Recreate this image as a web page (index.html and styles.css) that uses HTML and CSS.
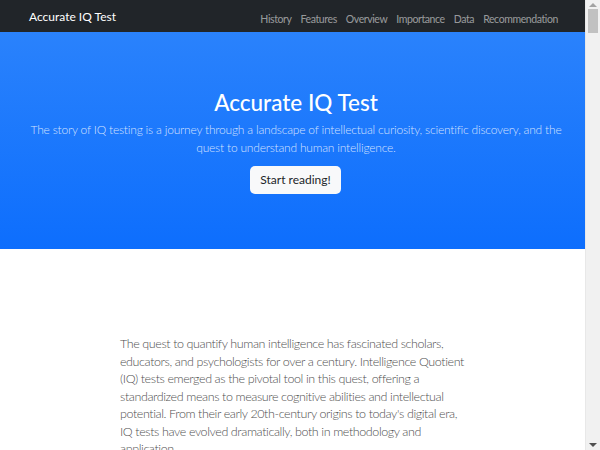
FILE: index.html
```html
<!DOCTYPE html>
<html lang="en">
<head>
<meta charset="utf-8">
<title>Accurate IQ Test</title>
<link rel="stylesheet" href="styles.css">
</head>
<body>
<div class="page">
  <nav class="navbar">
    <a class="brand" href="#">Accurate IQ Test</a>
    <ul class="nav-links">
      <li><a href="#">History</a></li>
      <li><a href="#">Features</a></li>
      <li><a href="#">Overview</a></li>
      <li><a href="#">Importance</a></li>
      <li><a href="#">Data</a></li>
      <li><a href="#">Recommendation</a></li>
    </ul>
  </nav>
  <header class="hero">
    <h1 class="hero-title">Accurate IQ Test</h1>
    <p class="hero-lead">The story of IQ testing is a journey through a landscape of intellectual curiosity, scientific discovery, and the quest to understand human intelligence.</p>
    <a class="btn-light" href="#">Start reading!</a>
  </header>
  <main class="content">
    <p class="intro">The quest to quantify human intelligence has fascinated scholars, educators, and psychologists for over a century. Intelligence Quotient (IQ) tests emerged as the pivotal tool in this quest, offering a standardized means to measure cognitive abilities and intellectual potential. From their early 20th-century origins to today's digital era, IQ tests have evolved dramatically, both in methodology and application.</p>
  </main>
</div>
<div class="scrollbar" aria-hidden="true">
  <span class="arrow arrow-up"></span>
  <span class="thumb"></span>
  <span class="arrow arrow-down"></span>
</div>
</body>
</html>
```
FILE: styles.css
```css
* { box-sizing: border-box; }
html, body { margin: 0; padding: 0; }
body {
  font-family: "Lato", "Liberation Sans", sans-serif;
  color: #212529;
  background: #fff;
}
a { text-decoration: none; }
.page {
  margin-right: 15px;
}
.navbar {
  height: 32px;
  background: #212529;
  display: flex;
  align-items: center;
  justify-content: space-between;
  padding: 0 27px 0 29px;
}
.brand {
  color: #fff;
  font-size: 12px;
  font-weight: 400;
}
.nav-links {
  list-style: none;
  margin: 0;
  padding: 0;
  display: flex;
  gap: 9px;
}
.nav-links a {
  color: rgba(255,255,255,0.55);
  font-size: 10.5px;
  letter-spacing: -0.4px;
}
.hero {
  height: 217px;
  background: linear-gradient(180deg, #2a82fc 0%, #0d6efd 100%);
  display: flex;
  flex-direction: column;
  align-items: center;
  padding-top: 57px;
  text-align: center;
  color: #fff;
}
.hero-title {
  margin: 0 0 5px;
  font-size: 22.5px;
  font-weight: 500;
  line-height: 27px;
  padding-left: 7px;
}
.hero-lead {
  margin: 0 0 9px;
  font-size: 12px;
  font-weight: 300;
  line-height: 18px;
  letter-spacing: -0.2px;
  width: 560px;
  padding-left: 7px;
  color: rgba(255,255,255,0.8);
}
.btn-light {
  display: inline-block;
  background: #f8f9fa;
  color: #212529;
  font-size: 12px;
  line-height: 28px;
  height: 28px;
  padding: 0 10px;
  border-radius: 5px;
  margin-left: 6px;
}
.content {
  padding: 86px 0 40px 120px;
}
.intro {
  width: 352px;
  margin: 0;
  font-size: 12.5px;
  font-weight: 300;
  line-height: 17.5px;
  letter-spacing: -0.4px;
  color: #505050;
}
.scrollbar {
  position: fixed;
  top: 0;
  right: 0;
  width: 15px;
  height: 100%;
  background: #f1f1f1;
  border-left: 1px solid #e8e8e8;
}
.thumb {
  position: absolute;
  top: 9px;
  left: 2px;
  width: 10px;
  height: 24px;
  background: #c1c1c1;
}
.arrow {
  position: absolute;
  left: 3px;
  width: 0;
  height: 0;
  border-left: 4px solid transparent;
  border-right: 4px solid transparent;
}
.arrow-up {
  top: 3px;
  border-bottom: 4px solid #a3a3a3;
}
.arrow-down {
  bottom: 3px;
  border-top: 4px solid #505050;
}
```
